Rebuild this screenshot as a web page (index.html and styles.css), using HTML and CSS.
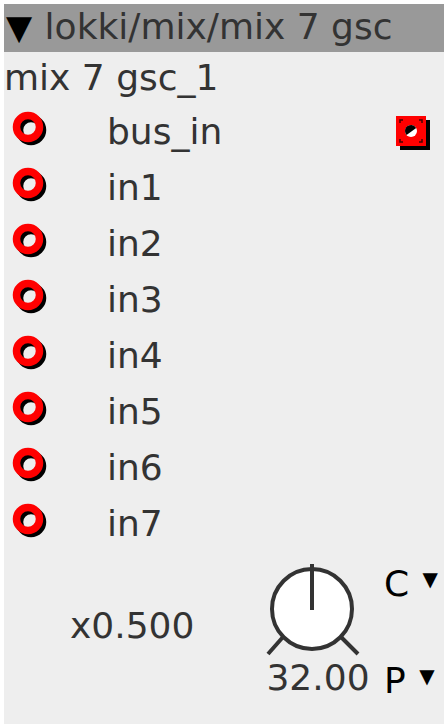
FILE: index.html
```html
<html>
  <head>
    <title>mix 7 gsc</title>
    <meta charset="utf-8" />
    <meta name="viewport" content="width=device-width, initial-scale=1">
    <link rel="stylesheet" href="styles.css">
  </head>
  <body>
    <div class="node">
      <div class="node-header"><span class="collapse">▼</span> lokki/mix/mix 7 gsc</div>
      <div class="instance">mix 7 gsc_1</div>

      <div class="ports">
        <div class="port">
          <svg class="jack" width="40" height="40" viewBox="0 0 40 40"><circle cx="19" cy="19" r="11.5" fill="none" stroke="#000" stroke-width="7.5"/><circle cx="16" cy="16" r="11.5" fill="none" stroke="#f00" stroke-width="7.5"/></svg>
          <span class="label">bus_in</span>
          <svg class="outlet" width="40" height="40" viewBox="0 0 40 40">
            <rect x="8" y="8" width="30" height="30" fill="#000"/>
            <rect x="4" y="4" width="30" height="30" fill="#f00"/>
            <path d="M8 11v-3h3M27 8h3v3M30 27v3h-3M11 30h-3v-3" fill="none" stroke="#400" stroke-width="1.5"/>
            <circle cx="19" cy="19" r="6" fill="#fff"/>
            <path d="M13 19a6 6 0 0 1 11.2 -3l-9.6 7a6 6 0 0 1 -1.6 -4z" fill="#000"/>
          </svg>
        </div>
        <div class="port">
          <svg class="jack" width="40" height="40" viewBox="0 0 40 40"><circle cx="19" cy="19" r="11.5" fill="none" stroke="#000" stroke-width="7.5"/><circle cx="16" cy="16" r="11.5" fill="none" stroke="#f00" stroke-width="7.5"/></svg>
          <span class="label">in1</span>
        </div>
        <div class="port">
          <svg class="jack" width="40" height="40" viewBox="0 0 40 40"><circle cx="19" cy="19" r="11.5" fill="none" stroke="#000" stroke-width="7.5"/><circle cx="16" cy="16" r="11.5" fill="none" stroke="#f00" stroke-width="7.5"/></svg>
          <span class="label">in2</span>
        </div>
        <div class="port">
          <svg class="jack" width="40" height="40" viewBox="0 0 40 40"><circle cx="19" cy="19" r="11.5" fill="none" stroke="#000" stroke-width="7.5"/><circle cx="16" cy="16" r="11.5" fill="none" stroke="#f00" stroke-width="7.5"/></svg>
          <span class="label">in3</span>
        </div>
        <div class="port">
          <svg class="jack" width="40" height="40" viewBox="0 0 40 40"><circle cx="19" cy="19" r="11.5" fill="none" stroke="#000" stroke-width="7.5"/><circle cx="16" cy="16" r="11.5" fill="none" stroke="#f00" stroke-width="7.5"/></svg>
          <span class="label">in4</span>
        </div>
        <div class="port">
          <svg class="jack" width="40" height="40" viewBox="0 0 40 40"><circle cx="19" cy="19" r="11.5" fill="none" stroke="#000" stroke-width="7.5"/><circle cx="16" cy="16" r="11.5" fill="none" stroke="#f00" stroke-width="7.5"/></svg>
          <span class="label">in5</span>
        </div>
        <div class="port">
          <svg class="jack" width="40" height="40" viewBox="0 0 40 40"><circle cx="19" cy="19" r="11.5" fill="none" stroke="#000" stroke-width="7.5"/><circle cx="16" cy="16" r="11.5" fill="none" stroke="#f00" stroke-width="7.5"/></svg>
          <span class="label">in6</span>
        </div>
        <div class="port">
          <svg class="jack" width="40" height="40" viewBox="0 0 40 40"><circle cx="19" cy="19" r="11.5" fill="none" stroke="#000" stroke-width="7.5"/><circle cx="16" cy="16" r="11.5" fill="none" stroke="#f00" stroke-width="7.5"/></svg>
          <span class="label">in7</span>
        </div>
      </div>

      <div class="controls">
        <div class="gain">x0.500</div>
        <div class="knob-col">
          <svg class="knob" width="96" height="96" viewBox="0 0 96 96">
            <path d="M4 94L19 77M77 77L94 94" stroke="#333" stroke-width="4" fill="none"/>
            <circle cx="48" cy="49" r="40" fill="#fff" stroke="#333" stroke-width="4"/>
            <path d="M48 4V50" stroke="#333" stroke-width="4"/>
          </svg>
          <div class="knob-value">32.00</div>
        </div>
        <div class="menus">
          <div class="menu">C <span class="arrow">▼</span></div>
          <div class="menu">P <span class="arrow">▼</span></div>
        </div>
      </div>
    </div>
  </body>
</html>
```
FILE: styles.css
```css
body{
    margin: 0;
    padding: 4px;
    background-color: #fff;
    font-family: "DejaVu Sans", sans-serif;
    font-size: 36px;
    color: #333;
}

.node{
    width: 440px;
    height: 720px;
    background-color: #eee;
    display: flex;
    flex-direction: column;
}

.node-header{
    height: 48px;
    line-height: 46px;
    background-color: #999;
    padding-left: 2px;
    white-space: nowrap;
}

.collapse{
    color: #000;
    font-size: 34px;
    margin-right: 1px;
}

.instance{
    height: 51px;
    line-height: 52px;
}

.ports{
    display: flex;
    flex-direction: column;
}

.port{
    height: 56px;
    display: flex;
    align-items: center;
}

.jack{
    margin-left: 8px;
    flex: none;
}

.label{
    margin-left: 55px;
    flex: 1;
}

.outlet{
    margin-right: 12px;
    margin-top: 2px;
    flex: none;
}

.controls{
    flex: 1;
    display: flex;
}

.gain{
    width: 182px;
    padding-left: 66px;
    padding-top: 54px;
}

.knob-col{
    width: 120px;
    padding-top: 9px;
    display: flex;
    flex-direction: column;
    align-items: center;
}

.knob-value{
    line-height: 40px;
    margin-top: 2px;
    margin-left: 12px;
}

.menus{
    display: flex;
    flex-direction: column;
    justify-content: space-between;
    padding-top: 8px;
    height: 142px;
    margin-left: 12px;
    color: #000;
}

.menu{
    line-height: 40px;
    white-space: nowrap;
}

.arrow{
    font-size: 20px;
    vertical-align: 10px;
    margin-left: 2px;
}
```
